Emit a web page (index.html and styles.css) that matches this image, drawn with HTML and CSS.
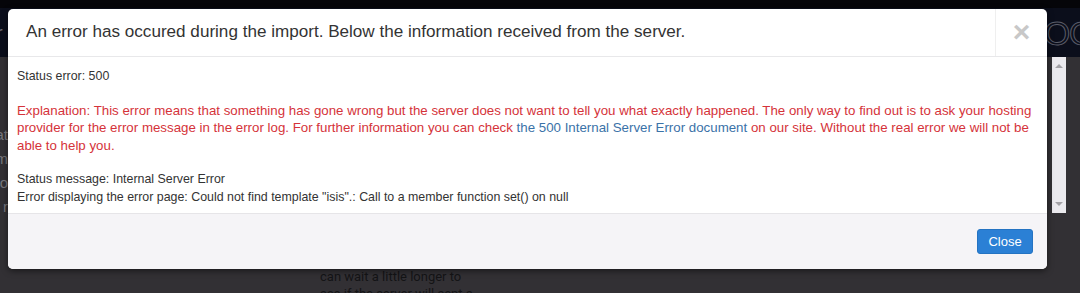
FILE: index.html
```html
<!DOCTYPE html>
<html lang="en">
<head>
    <meta charset="UTF-8">
    <meta name="viewport" content="width=device-width, initial-scale=1.0">
    <title>Import error</title>
    <link rel="stylesheet" href="styles.css">
</head>
<body>
    <div class="topbar">
        <span class="nav-left">r</span>
        <span class="logo">OOO</span>
    </div>
    <div class="page">
        <div class="side">
            <span>at</span>
            <span>m</span>
            <span>o</span>
            <span>r</span>
        </div>
        <div class="content">
            <p>can wait a little longer to<br>see if the server will sent a</p>
        </div>
        <div class="scrollbar">
            <span class="arrow up"></span>
            <span class="arrow down"></span>
        </div>
    </div>

    <div class="modal">
        <div class="modal-header">
            <h3 class="modal-title">An error has occured during the import. Below the information received from the server.</h3>
            <div class="close-x">&times;</div>
        </div>
        <div class="modal-body">
            <p>Status error: 500</p>
            <p class="error">Explanation: This error means that something has gone wrong but the server does not want to tell you what exactly happened. The only way to find out is to ask your hosting provider for the error message in the error log. For further information you can check <a href="#">the 500 Internal Server Error document</a> on our site. Without the real error we will not be able to help you.</p>
            <p>Status message: Internal Server Error<br>Error displaying the error page: Could not find template "isis".: Call to a member function set() on null</p>
        </div>
        <div class="modal-footer">
            <button class="btn">Close</button>
        </div>
    </div>
</body>
</html>
```
FILE: styles.css
```css
body {
    margin: 0;
    width: 1080px;
    height: 293px;
    overflow: hidden;
    background: #323034;
    font-family: "Liberation Sans", Arial, sans-serif;
    position: relative;
}
.topbar {
    height: 49px;
    border-top: 8px solid #050509;
    background: #0b0e1b;
    display: flex;
    align-items: center;
    justify-content: space-between;
    overflow: hidden;
}
.nav-left {
    color: #6b6b78;
    font-size: 20px;
    margin-left: -4px;
    margin-top: 2px;
}
.logo {
    color: transparent;
    -webkit-text-stroke: 1px #5a5c68;
    font-size: 34px;
    letter-spacing: -1px;
    margin-right: -40px;
    margin-top: 2px;
}
.page {
    display: flex;
    height: 236px;
}
.side {
    width: 8px;
    display: flex;
    flex-direction: column;
    align-items: flex-end;
    overflow: hidden;
    padding-top: 70px;
    gap: 9px;
    color: #77767c;
    font-size: 15px;
    line-height: 15px;
}
.content {
    flex: 1;
    padding-left: 312px;
    padding-top: 211px;
}
.content p {
    margin: 0;
    color: #141416;
    font-family: Roboto, "Liberation Sans", sans-serif;
    font-size: 13px;
    line-height: 17px;
}
.scrollbar {
    width: 14px;
    height: 156px;
    margin-right: 14px;
    background: #ebeaee;
    position: relative;
}
.arrow {
    position: absolute;
    left: 3px;
    width: 0;
    height: 0;
    border-left: 4px solid transparent;
    border-right: 4px solid transparent;
}
.arrow.up {
    top: 7px;
    border-bottom: 4px solid #a3a2a6;
}
.arrow.down {
    bottom: 7px;
    border-top: 4px solid #a3a2a6;
}

.modal {
    position: absolute;
    left: 8px;
    top: 9px;
    width: 1039px;
    height: 260px;
    background: #fff;
    border-radius: 5px;
    overflow: hidden;
    box-shadow: 0 2px 6px rgba(0, 0, 0, 0.5);
    display: flex;
    flex-direction: column;
}
.modal-header {
    height: 47px;
    border-bottom: 1px solid #e8e8ea;
    display: flex;
}
.modal-title {
    flex: 1;
    margin: 0;
    padding-left: 18px;
    font-size: 17.1px;
    font-weight: normal;
    line-height: 46px;
    color: #333;
}
.close-x {
    width: 51px;
    border-left: 1px solid #efefef;
    text-align: center;
    font-size: 30px;
    font-weight: bold;
    line-height: 46px;
    color: #c8c8c8;
}
.modal-body {
    height: 156px;
    box-sizing: border-box;
    padding: 10.5px 9px 0;
    font-size: 12.4px;
    line-height: 17.3px;
    color: #333;
}
.modal-body p {
    margin: 0 0 17.3px;
}
.error {
    color: #d5333a;
    font-size: 13.3px;
}
.error a {
    color: #3a72a8;
    text-decoration: none;
}
.modal-footer {
    flex: 1;
    background: #f5f4f7;
    border-top: 1px solid #e6e5e8;
    display: flex;
    justify-content: flex-end;
    align-items: flex-start;
    padding: 15px 14px 0 0;
}
.btn {
    width: 56px;
    height: 25px;
    border: 1px solid #2473c2;
    border-radius: 3px;
    background: #2b80d5;
    color: #fff;
    font-family: "Liberation Sans", Arial, sans-serif;
    font-size: 13px;
    padding: 0;
}
```
